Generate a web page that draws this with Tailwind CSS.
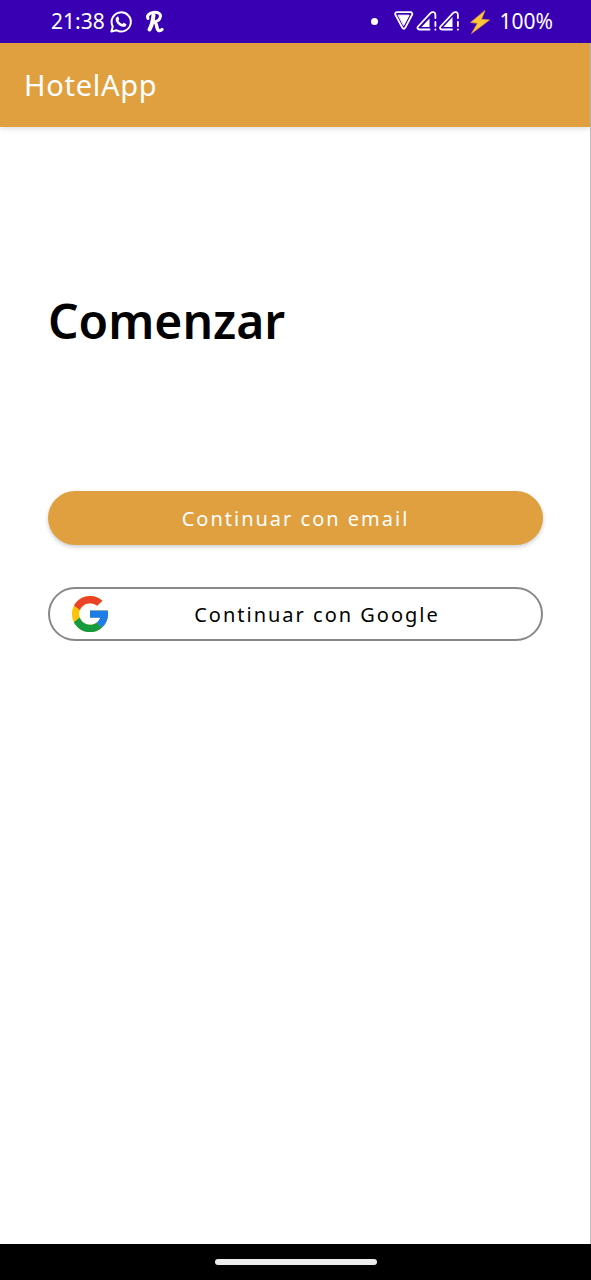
<!DOCTYPE html>
<html lang="es">
<head>
<meta charset="utf-8">
<meta name="viewport" content="width=device-width, initial-scale=1">
<title>HotelApp</title>
<script src="https://cdn.jsdelivr.net/npm/@tailwindcss/browser@4"></script>
</head>
<body class="flex min-h-screen flex-col bg-white font-['Noto_Sans',sans-serif] text-black">
  <!-- Status bar -->
  <div class="flex h-[43px] items-center justify-between bg-[#3800b2] pl-[51px] pr-[38px] text-[21px] text-white">
    <div class="flex items-center">
      <span>21:38</span>
      <svg class="ml-1 size-6" viewBox="0 0 24 24" fill="none" stroke="currentColor" stroke-width="2" aria-label="WhatsApp">
        <path d="M2.4 21.6l1.4-5.1A9.6 9.6 0 1 1 7.4 20.2z" stroke-linejoin="round"/>
        <path d="M8.2 6.8c.5-.4 1-.3 1.2.2l.8 1.9c.1.3 0 .6-.8 1.5 1 1.8 2.2 2.9 4.1 3.6.7-.9 1-1.300 1.500-1.100l2 1c.6.3.3 1.500-.1 2-.7.8-2 1.200-3.400.8-3.200-.9-5.500-3-6.600-5.800-.6-1.600-.1-3.100 1.300-4.100z" fill="currentColor" stroke="none"/>
      </svg>
      <svg class="ml-3 h-6 w-5" viewBox="0 0 20 24" fill="none" stroke="currentColor" stroke-linecap="round" stroke-linejoin="round" aria-label="R">
        <path d="M8.500 5C8 10 6.500 16 4.500 19.500" stroke-width="4"/>
        <path d="M3 8.500C1.500 6 4 3 8 2.500c5-.6 8.200 1 7.300 4.500-.7 3-3.400 4.500-6.300 4.700" stroke-width="3"/>
        <path d="M9.500 12c3 1 1.500 7.700 4.300 8.500 1.500.4 2.500-.2 3.200-1" stroke-width="3.400"/>
      </svg>
    </div>
    <div class="flex items-center">
      <span class="size-[7px] rounded-full bg-white"></span>
      <svg class="ml-4 h-6 w-[66px]" viewBox="0 0 66 24" fill="none" stroke="currentColor" stroke-width="1.800" stroke-linejoin="round" stroke-linecap="round" aria-label="Wi-Fi y señal móvil">
        <path d="M3 2.200h13.500c1.500 0 2.300 1.500 1.500 2.800L11.200 17.800c-.8 1.300-2 1.300-2.800 0L1.500 5C.7 3.700 1.500 2.200 3 2.200z"/>
        <path d="M4.500 5.200h10.600L9.800 15.200z" fill="currentColor" stroke-width="1"/>
        <path d="M35.500 19.500H25.500c-2 0-2.700-1.700-1.500-3L36.500 3.200c2-1.900 4.900-1.200 4.900 1.500v3.300M41.400 12v4M41.400 19.500v.2"/>
        <path d="M27.500 17h8v-8.500z" fill="currentColor" stroke="none"/>
        <path d="M58 19.500H48c-2 0-2.700-1.700-1.500-3L59 3.200c2-1.900 4.900-1.200 4.900 1.500v3.300M63.900 12v4M63.900 19.500v.2"/>
        <path d="M49.500 17H58.500v-10z" fill="currentColor" stroke="none"/>
      </svg>
      <svg class="ml-2 size-6" viewBox="0 0 24 24" aria-label="Cargando">
        <path d="M17 .5L2.500 12.500l7 .8L3.500 23.500 21.500 10l-8-.7z" fill="#fdc637" stroke="#e9a13c" stroke-width=".7" stroke-linejoin="round"/>
      </svg>
      <span class="ml-2">100%</span>
    </div>
  </div>

  <div class="flex grow flex-col border-r border-[#bdbdbd]">
    <header class="flex h-[84px] items-center bg-[#e0a040] px-6 text-white shadow-[0_2px_5px_rgba(0,0,0,0.12)]">
      <h1 class="text-[29px] leading-9 tracking-wide">HotelApp</h1>
    </header>

    <main class="flex grow flex-col pr-[47px] pl-12 pt-[160px]">
      <h2 class="text-5xl leading-[68px] font-semibold">Comenzar</h2>
      <div class="mt-[136px] flex flex-col gap-[42px]">
        <button type="button" class="h-[54px] rounded-full bg-[#e0a040] pt-0.5 text-center text-xl tracking-widest text-white shadow-[0_2px_4px_rgba(0,0,0,0.2)]">Continuar con email</button>
        <button type="button" class="flex h-[54px] items-center rounded-full border-2 border-[#888888] bg-white pr-4 pl-[21px] text-xl tracking-widest">
          <svg class="size-[38px]" viewBox="3 3 42 42" aria-hidden="true">
            <path fill="#fbc40a" d="M43.600 20.100H42V20H24v8h11.300C33.700 32.700 29.200 36 24 36c-6.600 0-12-5.400-12-12s5.400-12 12-12c3.100 0 5.800 1.200 8 3l5.700-5.700C34 6.100 29.300 4 24 4 13 4 4 13 4 24s9 20 20 20 20-9 20-20c0-1.300-.1-2.700-.4-3.900z"/>
            <path fill="#ea4328" d="M6.300 14.700l6.600 4.800C14.700 15.100 19 12 24 12c3.100 0 5.800 1.200 8 3l5.700-5.700C34 6.100 29.300 4 24 4 16.300 4 9.700 8.300 6.300 14.700z"/>
            <path fill="#149b3f" d="M24 44c5.200 0 9.900-2 13.400-5.200l-6.200-5.200C29.200 35.100 26.700 36 24 36c-5.200 0-9.600-3.300-11.300-8l-6.500 5C9.500 39.600 16.200 44 24 44z"/>
            <path fill="#1c7ce8" d="M43.600 20.100H24v8h11.300c-.8 2.200-2.200 4.200-4.100 5.500l6.200 5.200C37 39.200 44 34 44 24c0-1.300-.1-2.700-.4-3.900z"/>
          </svg>
          <span class="grow pt-0.5 text-center">Continuar con Google</span>
        </button>
      </div>
    </main>
  </div>

  <!-- Gesture bar -->
  <div class="flex h-9 items-center justify-center bg-black">
    <div class="h-1.5 w-[162px] rounded-full bg-[#ececec]"></div>
  </div>
</body>
</html>
